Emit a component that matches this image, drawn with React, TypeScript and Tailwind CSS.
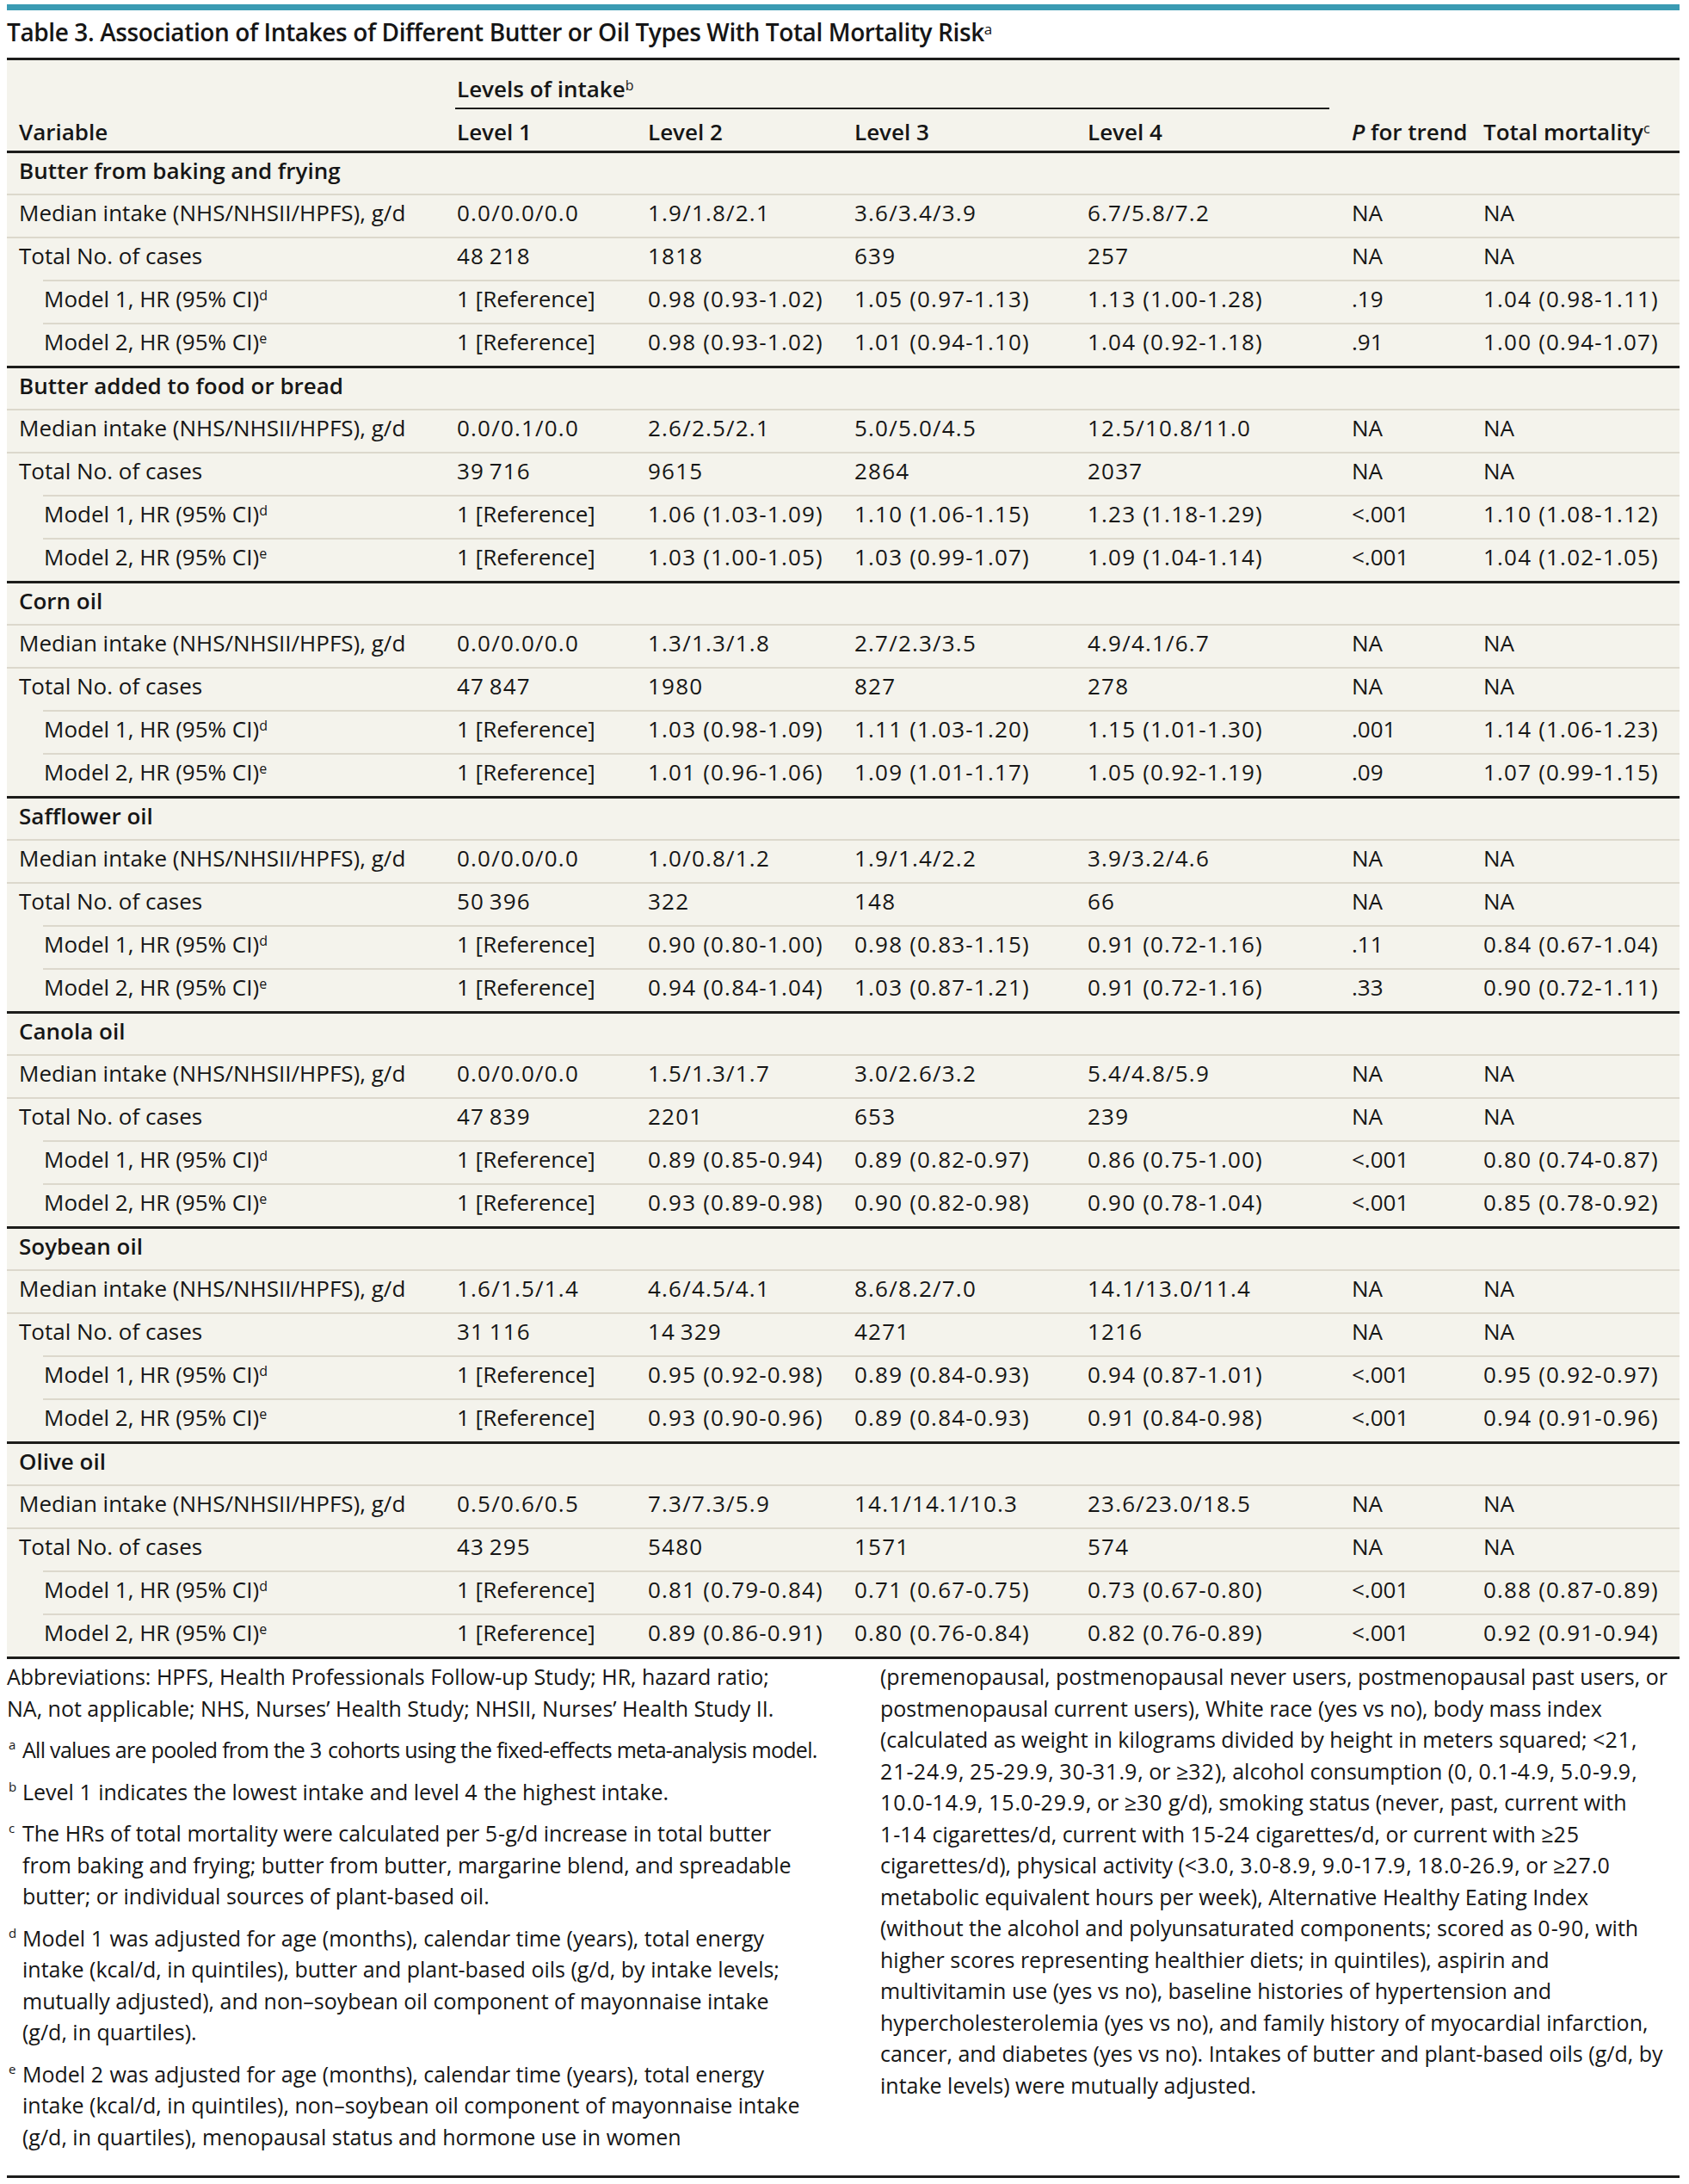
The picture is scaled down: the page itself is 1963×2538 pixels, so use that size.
import React from "react";

type Section = {
  title: string;
  median: string[];
  cases: string[];
  m1: string[];
  m2: string[];
};

const sections: Section[] = [
  {
    title: "Butter from baking and frying",
    median: ["0.0/0.0/0.0", "1.9/1.8/2.1", "3.6/3.4/3.9", "6.7/5.8/7.2"],
    cases: ["48\u2009218", "1818", "639", "257"],
    m1: ["0.98 (0.93-1.02)", "1.05 (0.97-1.13)", "1.13 (1.00-1.28)", ".19", "1.04 (0.98-1.11)"],
    m2: ["0.98 (0.93-1.02)", "1.01 (0.94-1.10)", "1.04 (0.92-1.18)", ".91", "1.00 (0.94-1.07)"],
  },
  {
    title: "Butter added to food or bread",
    median: ["0.0/0.1/0.0", "2.6/2.5/2.1", "5.0/5.0/4.5", "12.5/10.8/11.0"],
    cases: ["39\u2009716", "9615", "2864", "2037"],
    m1: ["1.06 (1.03-1.09)", "1.10 (1.06-1.15)", "1.23 (1.18-1.29)", "<.001", "1.10 (1.08-1.12)"],
    m2: ["1.03 (1.00-1.05)", "1.03 (0.99-1.07)", "1.09 (1.04-1.14)", "<.001", "1.04 (1.02-1.05)"],
  },
  {
    title: "Corn oil",
    median: ["0.0/0.0/0.0", "1.3/1.3/1.8", "2.7/2.3/3.5", "4.9/4.1/6.7"],
    cases: ["47\u2009847", "1980", "827", "278"],
    m1: ["1.03 (0.98-1.09)", "1.11 (1.03-1.20)", "1.15 (1.01-1.30)", ".001", "1.14 (1.06-1.23)"],
    m2: ["1.01 (0.96-1.06)", "1.09 (1.01-1.17)", "1.05 (0.92-1.19)", ".09", "1.07 (0.99-1.15)"],
  },
  {
    title: "Safflower oil",
    median: ["0.0/0.0/0.0", "1.0/0.8/1.2", "1.9/1.4/2.2", "3.9/3.2/4.6"],
    cases: ["50\u2009396", "322", "148", "66"],
    m1: ["0.90 (0.80-1.00)", "0.98 (0.83-1.15)", "0.91 (0.72-1.16)", ".11", "0.84 (0.67-1.04)"],
    m2: ["0.94 (0.84-1.04)", "1.03 (0.87-1.21)", "0.91 (0.72-1.16)", ".33", "0.90 (0.72-1.11)"],
  },
  {
    title: "Canola oil",
    median: ["0.0/0.0/0.0", "1.5/1.3/1.7", "3.0/2.6/3.2", "5.4/4.8/5.9"],
    cases: ["47\u2009839", "2201", "653", "239"],
    m1: ["0.89 (0.85-0.94)", "0.89 (0.82-0.97)", "0.86 (0.75-1.00)", "<.001", "0.80 (0.74-0.87)"],
    m2: ["0.93 (0.89-0.98)", "0.90 (0.82-0.98)", "0.90 (0.78-1.04)", "<.001", "0.85 (0.78-0.92)"],
  },
  {
    title: "Soybean oil",
    median: ["1.6/1.5/1.4", "4.6/4.5/4.1", "8.6/8.2/7.0", "14.1/13.0/11.4"],
    cases: ["31\u2009116", "14\u2009329", "4271", "1216"],
    m1: ["0.95 (0.92-0.98)", "0.89 (0.84-0.93)", "0.94 (0.87-1.01)", "<.001", "0.95 (0.92-0.97)"],
    m2: ["0.93 (0.90-0.96)", "0.89 (0.84-0.93)", "0.91 (0.84-0.98)", "<.001", "0.94 (0.91-0.96)"],
  },
  {
    title: "Olive oil",
    median: ["0.5/0.6/0.5", "7.3/7.3/5.9", "14.1/14.1/10.3", "23.6/23.0/18.5"],
    cases: ["43\u2009295", "5480", "1571", "574"],
    m1: ["0.81 (0.79-0.84)", "0.71 (0.67-0.75)", "0.73 (0.67-0.80)", "<.001", "0.88 (0.87-0.89)"],
    m2: ["0.89 (0.86-0.91)", "0.80 (0.76-0.84)", "0.82 (0.76-0.89)", "<.001", "0.92 (0.91-0.94)"],
  },
];

// digits in the source font run a little wider than Open Sans
function Digits({ text }: { text: string }) {
  return (
    <>
      {text.split(/(\d+)/).map((p, i) =>
        /^\d+$/.test(p) ? (
          <span key={i} className="tracking-[1px]">
            {p}
          </span>
        ) : (
          p
        )
      )}
    </>
  );
}

function Row({
  label,
  cells,
  indent,
}: {
  label: React.ReactNode;
  cells: string[];
  indent?: boolean;
}) {
  return (
    <div
      className={
        indent
          ? "ml-[42px] grid h-[50px] grid-cols-[481px_222px_240px_271px_307px_153px_228px] border-t-2 border-[#dcd8cc] leading-[40px]"
          : "grid h-[50px] grid-cols-[523px_222px_240px_271px_307px_153px_228px] border-t-2 border-[#dcd8cc] leading-[40px]"
      }
    >
      <div className={indent ? "pl-[1px]" : "pl-[14px]"}>{label}</div>
      {cells.map((c, i) => (
        <div
          key={i}
          className={
            c === "NA" || c.includes("Reference") || i === 4
              ? "whitespace-nowrap"
              : "whitespace-nowrap tracking-[1.2px]"
          }
        >
          {c}
        </div>
      ))}
    </div>
  );
}

function Sup({ children }: { children: React.ReactNode }) {
  return <sup className="text-[16px] font-normal">{children}</sup>;
}

const leftNotes: { mark?: string; lines: string[]; tight?: boolean }[] = [
  {
    lines: [
      "Abbreviations: HPFS, Health Professionals Follow-up Study; HR, hazard ratio;",
      "NA, not applicable; NHS, Nurses\u2019 Health Study; NHSII, Nurses\u2019 Health Study II.",
    ],
  },
  {
    mark: "a",
    tight: true,
    lines: ["All values are pooled from the 3 cohorts using the fixed-effects meta-analysis model."],
  },
  { mark: "b", lines: ["Level 1 indicates the lowest intake and level 4 the highest intake."] },
  {
    mark: "c",
    lines: [
      "The HRs of total mortality were calculated per 5-g/d increase in total butter",
      "from baking and frying; butter from butter, margarine blend, and spreadable",
      "butter; or individual sources of plant-based oil.",
    ],
  },
  {
    mark: "d",
    lines: [
      "Model 1 was adjusted for age (months), calendar time (years), total energy",
      "intake (kcal/d, in quintiles), butter and plant-based oils (g/d, by intake levels;",
      "mutually adjusted), and non\u2013soybean oil component of mayonnaise intake",
      "(g/d, in quartiles).",
    ],
  },
  {
    mark: "e",
    lines: [
      "Model 2 was adjusted for age (months), calendar time (years), total energy",
      "intake (kcal/d, in quintiles), non\u2013soybean oil component of mayonnaise intake",
      "(g/d, in quartiles), menopausal status and hormone use in women",
    ],
  },
];

const rightLines = [
  "(premenopausal, postmenopausal never users, postmenopausal past users, or",
  "postmenopausal current users), White race (yes vs no), body mass index",
  "(calculated as weight in kilograms divided by height in meters squared; <21,",
  "21-24.9, 25-29.9, 30-31.9, or \u226532), alcohol consumption (0, 0.1-4.9, 5.0-9.9,",
  "10.0-14.9, 15.0-29.9, or \u226530 g/d), smoking status (never, past, current with",
  "1-14 cigarettes/d, current with 15-24 cigarettes/d, or current with \u226525",
  "cigarettes/d), physical activity (<3.0, 3.0-8.9, 9.0-17.9, 18.0-26.9, or \u226527.0",
  "metabolic equivalent hours per week), Alternative Healthy Eating Index",
  "(without the alcohol and polyunsaturated components; scored as 0-90, with",
  "higher scores representing healthier diets; in quintiles), aspirin and",
  "multivitamin use (yes vs no), baseline histories of hypertension and",
  "hypercholesterolemia (yes vs no), and family history of myocardial infarction,",
  "cancer, and diabetes (yes vs no). Intakes of butter and plant-based oils (g/d, by",
  "intake levels) were mutually adjusted.",
];

export default function App() {
  return (
    <div className="min-h-[2538px] w-[1963px] bg-white pl-[8px] font-['Open_Sans',sans-serif] text-[#161616]">
      <div className="w-[1944px]">
        <div className="mt-[5px] h-[7px] bg-[#3a9bb3]" />
        <h1 className="mt-[11px] text-[28px] font-semibold leading-[28px] tracking-[-0.014em]">
          Table 3. Association of Intakes of Different Butter or Oil Types With Total Mortality Risk
          <sup className="text-[17px] font-normal">a</sup>
        </h1>

        <div className="mt-[16px] border-y-[3px] border-[#1d1d1b] bg-[#f4f3ec] text-[26px]">
          <div className="flex h-[57px] font-semibold">
            <div className="w-[521px]" />
            <div className="w-[1016px] border-b-2 border-[#1d1d1b] pl-[2px] pt-[20px] leading-[26px]">
              Levels of intake<Sup>b</Sup>
            </div>
          </div>
          <div className="grid h-[48px] grid-cols-[523px_222px_240px_271px_307px_153px_228px] pt-[13px] font-semibold leading-[26px]">
            <div className="pl-[14px]">Variable</div>
            <div>Level 1</div>
            <div>Level 2</div>
            <div>Level 3</div>
            <div>Level 4</div>
            <div className="whitespace-nowrap">
              <i>P</i> for trend
            </div>
            <div className="whitespace-nowrap">
              Total mortality<Sup>c</Sup>
            </div>
          </div>

          {sections.map((s) => (
            <div key={s.title} className="border-t-[3px] border-[#1d1d1b]">
              <div className="h-[47px] pl-[14px] font-semibold leading-[40px]">{s.title}</div>
              <Row label="Median intake (NHS/NHSII/HPFS), g/d" cells={[...s.median, "NA", "NA"]} />
              <Row label="Total No. of cases" cells={[...s.cases, "NA", "NA"]} />
              <Row
                indent
                label={
                  <>
                    Model 1, HR (95% CI)<Sup>d</Sup>
                  </>
                }
                cells={["1 [Reference]", ...s.m1]}
              />
              <Row
                indent
                label={
                  <>
                    Model 2, HR (95% CI)<Sup>e</Sup>
                  </>
                }
                cells={["1 [Reference]", ...s.m2]}
              />
            </div>
          ))}
        </div>

        <div className="mt-[2px] grid grid-cols-[998px_946px] text-[25px] leading-[36.5px]">
          <div className="flex flex-col gap-[12px]">
            {leftNotes.map((n, i) => (
              <div key={i} className="flex">
                {n.mark && (
                  <span className="w-[18px] shrink-0 pl-[2px] text-[15px] leading-[24px]">{n.mark}</span>
                )}
                <div className={n.tight ? "tracking-[-0.028em]" : ""}>
                  {n.lines.map((l, j) => (
                    <div key={j} className="whitespace-nowrap">
                      <Digits text={l} />
                    </div>
                  ))}
                </div>
              </div>
            ))}
          </div>
          <div className="pl-[17px]">
            {rightLines.map((l, j) => (
              <div key={j} className="whitespace-nowrap">
                <Digits text={l} />
              </div>
            ))}
          </div>
        </div>

        <div className="mt-[27px] h-[3px] bg-[#1d1d1b]" />
      </div>
    </div>
  );
}
